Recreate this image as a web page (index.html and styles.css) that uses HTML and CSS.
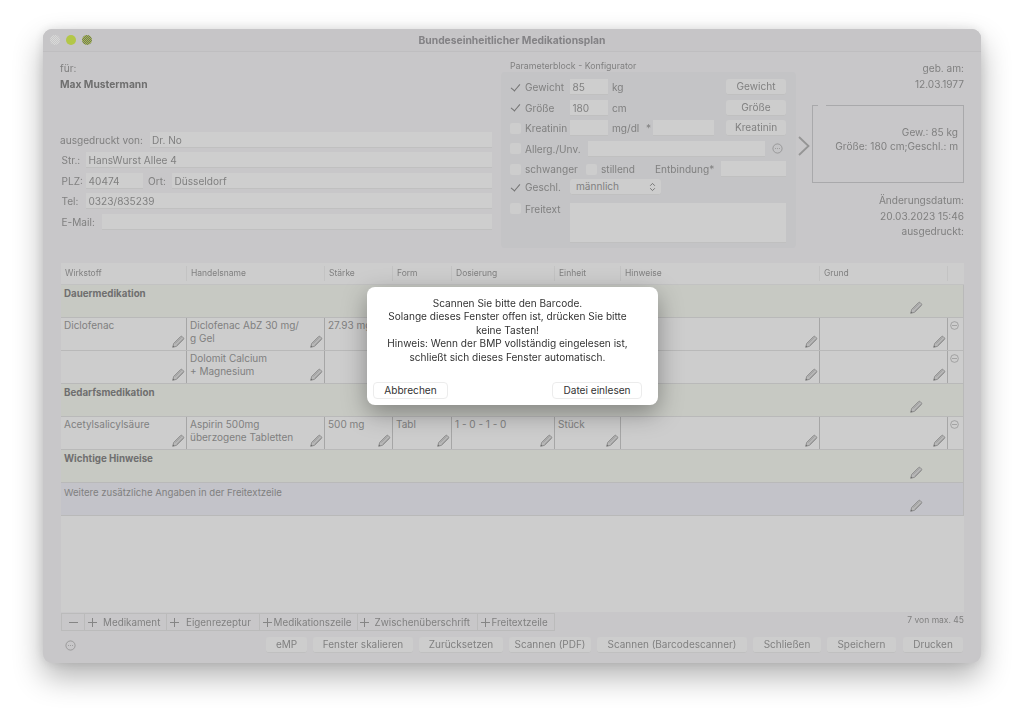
FILE: index.html
```html
<!DOCTYPE html>
<html lang="de">
<head>
    <meta charset="UTF-8">
    <meta name="viewport" content="width=device-width, initial-scale=1.0">
    <title>Bundeseinheitlicher Medikationsplan</title>
    <link rel="stylesheet" href="styles.css">
</head>
<body>
<svg class="defs" width="0" height="0">
    <symbol id="pencil" viewBox="0 0 13 13">
        <path d="M.7 12.300l1-3.900 6.700-6.700q.9-.9 1.800-.1l1.200 1.200q.8.9-.1 1.800l-6.700 6.700z" fill="#b8b8b8" stroke="#828282" stroke-width=".8" stroke-linejoin="round"/>
        <path d="M3 8.700l6.500-6.500M4.600 10.300l6.500-6.500" stroke="#8b8b8b" stroke-width=".6"/>
        <path d="M.7 12.300l.5-1.900 1.400 1.400z" fill="#6e6e6e"/>
    </symbol>
    <symbol id="more" viewBox="0 0 12 12">
        <circle cx="6" cy="6" r="5" fill="none" stroke="#8a8a8a" stroke-width=".8"/>
        <path d="M3.500 6h.8M5.600 6h.8M7.700 6h.8" stroke="#8a8a8a" stroke-width="1"/>
    </symbol>
    <symbol id="minus" viewBox="0 0 10 10">
        <circle cx="5" cy="5" r="4.300" fill="none" stroke="#929292" stroke-width=".8"/>
        <path d="M2.200 5h5.600" stroke="#929292" stroke-width=".8"/>
    </symbol>
</svg>

<div class="window">
    <div class="titlebar">
        <span class="light light-close"></span>
        <span class="light light-min"></span>
        <span class="light light-zoom"></span>
        <span class="title">Bundeseinheitlicher Medikationsplan</span>
    </div>

    <div class="top">
        <div class="patient">
            <div class="patient-name">
                <div>für:</div>
                <b>Max Mustermann</b>
            </div>
            <div class="field-row"><label class="lbl-von">ausgedruckt von:</label><span class="field grow">Dr. No</span></div>
            <div class="field-row"><label class="lbl-short">Str.:</label><span class="field grow">HansWurst Allee 4</span></div>
            <div class="field-row"><label class="lbl-short">PLZ:</label><span class="field plz">40474</span><label class="lbl-ort">Ort:</label><span class="field grow">Düsseldorf</span></div>
            <div class="field-row"><label class="lbl-short">Tel:</label><span class="field grow">0323/835239</span></div>
            <div class="field-row"><label class="lbl-mail">E-Mail:</label><span class="field grow"></span></div>
        </div>

        <div class="params">
            <div class="params-title">Parameterblock - Konfigurator</div>
            <div class="params-box">
                <div class="p-row">
                    <span class="check on"></span><span class="p-label">Gewicht</span>
                    <span class="field p-num">85</span><span class="p-unit">kg</span>
                    <span class="p-fill"></span><span class="btn p-btn">Gewicht</span>
                </div>
                <div class="p-row">
                    <span class="check on"></span><span class="p-label">Größe</span>
                    <span class="field p-num">180</span><span class="p-unit">cm</span>
                    <span class="p-fill"></span><span class="btn p-btn">Größe</span>
                </div>
                <div class="p-row">
                    <span class="check"></span><span class="p-label">Kreatinin</span>
                    <span class="field p-num"></span><span class="p-unit">mg/dl</span>
                    <span class="p-star">*</span><span class="field p-krea"></span>
                    <span class="p-fill"></span><span class="btn p-btn">Kreatinin</span>
                </div>
                <div class="p-row">
                    <span class="check"></span><span class="p-label p-allerg">Allerg./Unv.</span>
                    <span class="field p-allerg-field"></span>
                    <svg class="p-more"><use href="#more"/></svg>
                </div>
                <div class="p-row p-row-preg">
                    <span class="check"></span><span class="p-label p-schw">schwanger</span>
                    <span class="check"></span><span class="p-label p-still">stillend</span>
                    <span class="p-label">Entbindung*</span>
                    <span class="p-fill"></span><span class="field p-entb"></span>
                </div>
                <div class="p-row p-row-sel">
                    <span class="check on"></span><span class="p-label">Geschl.</span>
                    <span class="btn select">männlich
                        <svg class="updown" viewBox="0 0 8 12"><path d="M1.200 4.500L4 1.700l2.800 2.800M1.200 7.500L4 10.300l2.800-2.800" fill="none" stroke="#6e6e6e" stroke-width="1.100"/></svg>
                    </span>
                </div>
                <div class="p-row p-row-text">
                    <span class="check"></span><span class="p-label">Freitext</span>
                    <span class="field p-text"></span>
                </div>
            </div>
        </div>

        <svg class="arrow" viewBox="0 0 12 20"><path d="M1 1l9.500 9L1 19" fill="none" stroke="#959595" stroke-width="1.800"/></svg>

        <div class="side">
            <div class="side-top">geb. am:<br>12.03.1977</div>
            <div class="preview">Gew.: 85 kg<br>Größe: 180 cm;Geschl.: m</div>
            <div class="side-bottom">Änderungsdatum:<br>20.03.2023 15:46<br>ausgedruckt:</div>
        </div>
    </div>

    <div class="table">
        <div class="t-head">
            <span>Wirkstoff</span><span>Handelsname</span><span>Stärke</span><span>Form</span><span>Dosierung</span><span>Einheit</span><span>Hinweise</span><span>Grund</span><span></span>
        </div>

        <div class="t-section"><b>Dauermedikation</b><svg class="pencil"><use href="#pencil"/></svg></div>
        <div class="t-row">
            <div class="cell">Diclofenac<svg class="pencil"><use href="#pencil"/></svg></div>
            <div class="cell">Diclofenac AbZ 30 mg/<br>g Gel<svg class="pencil"><use href="#pencil"/></svg></div>
            <div class="cell">27.93 mg<svg class="pencil"><use href="#pencil"/></svg></div>
            <div class="cell"></div>
            <div class="cell"></div>
            <div class="cell"></div>
            <div class="cell"><svg class="pencil"><use href="#pencil"/></svg></div>
            <div class="cell"><svg class="pencil"><use href="#pencil"/></svg></div>
            <div class="cell cell-del"><svg class="minus"><use href="#minus"/></svg></div>
        </div>
        <div class="t-row">
            <div class="cell"><svg class="pencil"><use href="#pencil"/></svg></div>
            <div class="cell">Dolomit Calcium<br>+ Magnesium<svg class="pencil"><use href="#pencil"/></svg></div>
            <div class="cell"></div>
            <div class="cell"></div>
            <div class="cell"></div>
            <div class="cell"></div>
            <div class="cell"><svg class="pencil"><use href="#pencil"/></svg></div>
            <div class="cell"><svg class="pencil"><use href="#pencil"/></svg></div>
            <div class="cell cell-del"><svg class="minus"><use href="#minus"/></svg></div>
        </div>

        <div class="t-section"><b>Bedarfsmedikation</b><svg class="pencil"><use href="#pencil"/></svg></div>
        <div class="t-row">
            <div class="cell">Acetylsalicylsäure<svg class="pencil"><use href="#pencil"/></svg></div>
            <div class="cell">Aspirin 500mg<br>überzogene Tabletten<svg class="pencil"><use href="#pencil"/></svg></div>
            <div class="cell">500 mg<svg class="pencil"><use href="#pencil"/></svg></div>
            <div class="cell">Tabl<svg class="pencil"><use href="#pencil"/></svg></div>
            <div class="cell">1 - 0 - 1 - 0<svg class="pencil"><use href="#pencil"/></svg></div>
            <div class="cell">Stück<svg class="pencil"><use href="#pencil"/></svg></div>
            <div class="cell"><svg class="pencil"><use href="#pencil"/></svg></div>
            <div class="cell"><svg class="pencil"><use href="#pencil"/></svg></div>
            <div class="cell cell-del"><svg class="minus"><use href="#minus"/></svg></div>
        </div>

        <div class="t-section"><b>Wichtige Hinweise</b><svg class="pencil"><use href="#pencil"/></svg></div>
        <div class="t-section t-free">Weitere zusätzliche Angaben in der Freitextzeile<svg class="pencil"><use href="#pencil"/></svg></div>
        <div class="t-empty"></div>
    </div>

    <div class="toolbar">
        <div class="tools">
            <span class="tool tool-minus"><i class="dash"></i></span>
            <span class="tool t1"><i></i>Medikament</span>
            <span class="tool t2"><i></i>Eigenrezeptur</span>
            <span class="tool t3"><i></i>Medikationszeile</span>
            <span class="tool t4"><i></i>Zwischenüberschrift</span>
            <span class="tool t5"><i></i>Freitextzeile</span>
        </div>
        <span class="count">7 von max. 45</span>
    </div>

    <div class="actions">
        <svg class="act-more"><use href="#more"/></svg>
        <span class="btn a-emp">eMP</span>
        <span class="btn a-fenster">Fenster skalieren</span>
        <span class="btn a-reset">Zurücksetzen</span>
        <span class="btn a-pdf">Scannen (PDF)</span>
        <span class="btn a-barcode">Scannen (Barcodescanner)</span>
        <span class="btn a-close">Schließen</span>
        <span class="btn a-save">Speichern</span>
        <span class="btn a-print">Drucken</span>
    </div>

    <div class="dialog">
        <p>Scannen Sie bitte den Barcode.<br>Solange dieses Fenster offen ist, drücken Sie bitte keine Tasten!<br>Hinweis: Wenn der BMP vollständig eingelesen ist, schließt sich dieses Fenster automatisch.</p>
        <div class="dialog-btns">
            <span class="d-btn d-cancel">Abbrechen</span>
            <span class="d-btn d-open">Datei einlesen</span>
        </div>
    </div>
</div>
</body>
</html>
```

FILE: styles.css
```css
* {
    box-sizing: border-box;
}

html, body {
    margin: 0;
    padding: 0;
    background: #ffffff;
}

body {
    height: 721px;
    padding: 29px 43px 0;
    overflow: hidden;
    font-family: Inter, "Liberation Sans", sans-serif;
    font-size: 10.1px;
    color: #808080;
}

.defs {
    position: absolute;
}

/* window */
.window {
    position: relative;
    width: 938px;
    height: 634px;
    background: #c8c7c9;
    border-radius: 9px;
    box-shadow: 0 14px 30px rgba(0, 0, 0, 0.3), 0 0 12px rgba(0, 0, 0, 0.1);
    filter: blur(0.35px);
}

.titlebar {
    position: relative;
    height: 23px;
    display: flex;
    align-items: center;
    padding-left: 7px;
    gap: 6px;
    background: #c6c5c7;
    border-bottom: 1px solid #bfbec0;
    border-radius: 9px 9px 0 0;
}

.light {
    width: 10px;
    height: 10px;
    border-radius: 50%;
}

.light-close {
    background: repeating-conic-gradient(#d9d9d9 0 25%, #c8c8c8 0 50%) 0 0 / 2px 2px;
}

.light-min {
    background: #b3c748;
}

.light-zoom {
    background: repeating-conic-gradient(#adbf4c 0 25%, #6e7560 0 50%) 0 0 / 2px 2px;
}

.title {
    position: absolute;
    left: 0;
    right: 0;
    text-align: center;
    font-weight: 700;
    font-size: 10.3px;
    color: #838285;
}

/* top area */
.top {
    display: flex;
    height: 211px;
}

.patient {
    width: 450px;
    padding: 8px 1px 0 17px;
}

.patient-name {
    height: 72px;
    line-height: 16px;
}

.patient-name b {
    color: #6f6f6f;
    font-size: 10.250px;
}

.field-row {
    display: flex;
    align-items: center;
    height: 16px;
    margin-bottom: 4.400px;
}

.field {
    display: block;
    height: 16px;
    line-height: 16px;
    padding-left: 2.500px;
    background: #cecece;
    border-bottom: 1px solid #c0c0c0;
    color: #808080;
}

.grow {
    flex: 1;
}

.lbl-von {
    width: 89.500px;
}

.lbl-short {
    width: 26px;
    padding-left: 1.500px;
}

.lbl-mail {
    width: 42px;
    padding-left: 1.500px;
}

.lbl-ort {
    width: 29px;
    padding-left: 5px;
}

.plz {
    width: 57px;
}

/* parameter block */
.params {
    width: 295px;
    margin-left: 8px;
}

.params-title {
    height: 20px;
    padding: 9px 0 0 9px;
    font-size: 8.800px;
    line-height: 10px;
}

.params-box {
    height: 176px;
    padding-top: 7px;
    background: #c4c4c6;
    border-radius: 4px;
}

.p-row {
    display: flex;
    align-items: center;
    height: 16px;
    margin-bottom: 4.500px;
    padding: 0 10px 0 9px;
}

.check {
    position: relative;
    flex: none;
    width: 11px;
    height: 11px;
    margin-right: 4px;
    background: #cdcdcd;
    border-radius: 2px;
}

.check.on {
    background: none;
}

.check.on::after {
    content: "";
    position: absolute;
    left: 3px;
    top: 0;
    width: 4px;
    height: 8px;
    border: solid #737373;
    border-width: 0 1.300px 1.300px 0;
    transform: rotate(40deg);
}

.p-label {
    width: 45px;
    white-space: nowrap;
}

.p-num {
    width: 38px;
}

.p-unit {
    width: 38px;
    padding-left: 4px;
}

.p-star {
    width: 7px;
}

.p-krea {
    width: 61px;
}

.p-fill {
    flex: 1;
}

.p-btn {
    width: 60px;
    padding: 0 0 1px;
}

.p-allerg {
    width: 63px;
}

.p-allerg-field {
    width: 177px;
}

.p-more {
    width: 11px;
    height: 11px;
    margin-left: 7px;
}

.p-schw {
    width: 61px;
}

.p-still {
    width: 54px;
}

.p-entb {
    width: 65px;
}

.p-row-preg {
    margin-bottom: 2px;
}

.p-row-sel {
    margin-bottom: 8px;
}

.p-row-sel .check {
    margin-top: 1px;
}

.btn.select {
    position: relative;
    width: 91px;
    justify-content: flex-start;
    padding-left: 6px;
}

.updown {
    position: absolute;
    right: 5px;
    top: 3px;
    width: 7px;
    height: 10px;
}

.p-row-text {
    align-items: flex-start;
    height: 40px;
}

.p-text {
    width: 216px;
    height: 40px;
}

.arrow {
    width: 12px;
    height: 20px;
    margin: 84px 0 0 2px;
}

.side {
    width: 154px;
    padding: 8px 0 0;
    text-align: right;
    line-height: 15.500px;
}

.side-top {
    height: 45px;
    line-height: 16px;
}

.preview {
    position: relative;
    height: 78px;
    margin: 0 0 10px 2px;
    padding: 19px 5px 0 0;
    border: 1px solid #a9a9ab;
    line-height: 14px;
}

/* gap in the top line of the box */
.preview::before {
    content: "";
    position: absolute;
    left: 5px;
    top: -1px;
    width: 8px;
    height: 1px;
    background: #c8c7c9;
}

/* table */
.table {
    margin: 0 17px 0 18px;
    height: 350px;
}

.t-head,
.t-row {
    display: grid;
    grid-template-columns: 126px 138px 68px 59px 103px 66px 199px 128px 1fr;
}

.t-head {
    height: 22px;
    background: #cdcdcd;
    border-bottom: 1px solid #c2c2c2;
    font-size: 8.500px;
    line-height: 20px;
}

.t-head span {
    padding-left: 4px;
    border-right: 1px solid #c3c3c3;
    margin: 3px 0;
    line-height: 14px;
}

.t-head span:last-child {
    border-right: none;
}

.t-section,
.t-row {
    position: relative;
    height: 33px;
    border-bottom: 1px solid #b9b9b9;
    border-right: 1px solid #b9b9b9;
}

.t-section {
    padding: 3px 0 0 3px;
    background: #c7c9c3;
    font-size: 9.600px;
}

.t-section b {
    color: #6f6f6f;
    font-size: 9.750px;
}

.t-free {
    background: #c3c3c9;
    padding-top: 3.500px;
}

.t-section .pencil {
    right: 40px;
    bottom: 3px;
}

.t-row {
    background: #cdcdcd;
    font-size: 10px;
    line-height: 13.500px;
}

.cell {
    position: relative;
    padding: 0.500px 0 0 3px;
    border-right: 1px solid #a6a6a6;
    overflow: hidden;
    white-space: nowrap;
}

.cell-del {
    border-right: none;
}

.pencil {
    position: absolute;
    right: 1.500px;
    bottom: 2.500px;
    width: 13px;
    height: 13px;
}

.minus {
    position: absolute;
    right: 4px;
    top: 3px;
    width: 9px;
    height: 9px;
}

.t-empty {
    height: 96px;
    background: #cdcdcd;
}

/* bottom */
.toolbar {
    display: flex;
    justify-content: space-between;
    height: 24px;
    margin: 0 17px 0 18px;
}

.tools {
    display: flex;
    height: 18px;
    border: 1px solid #bbbbbb;
    border-right: none;
    font-size: 9.850px;
}

.tool {
    display: flex;
    align-items: center;
    border-right: 1px solid #bbbbbb;
    white-space: nowrap;
    line-height: 16px;
}

.tool i {
    flex: none;
    width: 9px;
    height: 9px;
    margin: 0 6px 0 3px;
    background:
        linear-gradient(#858585, #858585) center / 9px 1px no-repeat,
        linear-gradient(#858585, #858585) center / 1px 9px no-repeat;
}

.tool i.dash {
    margin: 0;
    background: linear-gradient(#858585, #858585) center / 9px 1px no-repeat;
}

.tool-minus {
    width: 23px;
    justify-content: center;
}

.t1 { width: 82px; }
.t2 { width: 93px; }
.t3 { width: 98px; }
.t4 { width: 120px; }
.t5 { width: 77px; }
.t2 i { margin-right: 7px; }
.t3 i { margin-right: 1.500px; }
.t4 i { margin: 0 5.500px 0 2px; }
.t5 i { margin-right: 1.500px; }

.count {
    font-size: 8.500px;
    line-height: 15px;
}

.actions {
    display: flex;
    align-items: center;
    justify-content: flex-end;
    gap: 6px;
    margin: 0 18px;
    position: relative;
}

.actions .btn {
    padding: 0 0 1px;
    font-size: 10px;
}

.a-emp { width: 41px; }
.a-fenster { width: 100px; }
.a-reset { width: 84px; }
.a-pdf { width: 82px; }
.a-barcode { width: 150px; }
.a-close { width: 68px; }
.a-save { width: 69px; }
.a-print { width: 60px; margin-left: 1px; }

.act-more {
    position: absolute;
    left: 4px;
    top: 3px;
    width: 11px;
    height: 11px;
}

.btn {
    display: inline-flex;
    align-items: center;
    justify-content: center;
    height: 16px;
    padding: 0 10px 1px;
    background: #cdcdcd;
    border-radius: 3px;
    border-bottom: 1px solid #c0c0c0;
    white-space: nowrap;
}

/* dialog */
.dialog {
    position: absolute;
    left: 324px;
    top: 258px;
    width: 291px;
    height: 118px;
    padding: 10px 21px 0 11px;
    background: #ffffff;
    border-radius: 8px;
    box-shadow: 0 8px 24px rgba(0, 0, 0, 0.35);
    color: #333333;
    text-align: center;
    line-height: 13.400px;
}

.dialog p {
    margin: 0;
}

.dialog-btns {
    position: absolute;
    left: 6px;
    right: 16px;
    bottom: 6px;
    display: flex;
    justify-content: space-between;
}

.d-btn {
    display: flex;
    align-items: center;
    justify-content: center;
    height: 17px;
    border: 1px solid #ececec;
    border-radius: 4px;
    background: #ffffff;
}

.d-cancel {
    width: 75px;
}

.d-open {
    width: 90px;
}
```
